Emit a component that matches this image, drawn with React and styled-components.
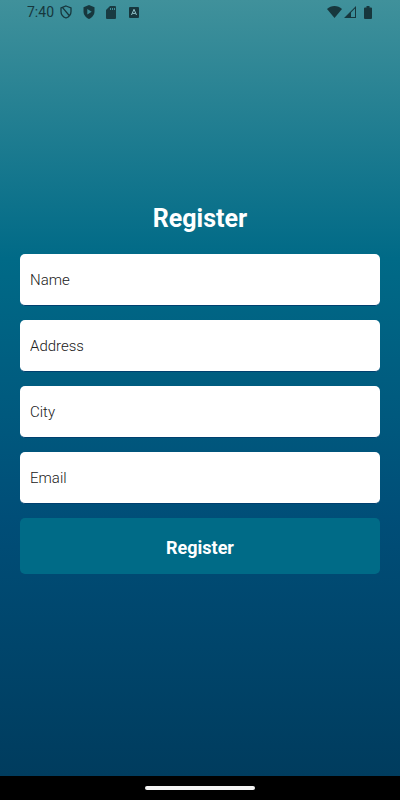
import React, { useState } from 'react';
import styled, { createGlobalStyle } from 'styled-components';

const GlobalStyle = createGlobalStyle`
  * {
    box-sizing: border-box;
  }

  body {
    margin: 0;
    background-color: #000000;
    font-family: Roboto, sans-serif;
  }
`;

const Screen = styled.div`
  display: flex;
  flex-direction: column;
  min-height: 100vh;
`;

const Background = styled.div`
  flex: 1;
  display: grid;
  grid-template-rows: 24px 1fr 24px;
  background-image: linear-gradient(#40919b, #006a87, #004e78, #003c5e);
`;

const StatusBar = styled.header`
  display: flex;
  align-items: center;
  justify-content: space-between;
  padding: 0 28px 0 27px;
  color: #17373d;
`;

const StatusGroup = styled.div`
  display: flex;
  align-items: center;
  gap: ${(props) => props.$gap}px;
`;

const Clock = styled.span`
  font-size: 14px;
  line-height: 24px;
`;

const Icon = styled.svg`
  display: block;
  fill: currentColor;
`;

const Form = styled.form`
  display: flex;
  flex-direction: column;
  justify-content: center;
  gap: 14px;
  padding: 0 20px;
`;

const Title = styled.h1`
  margin: 0 0 4px;
  color: #ffffff;
  font-size: 25px;
  font-weight: 700;
  line-height: 34px;
  text-align: center;
`;

const Input = styled.input`
  width: 100%;
  height: 52px;
  padding: 1px 10px 0;
  border: 1px solid #00406f;
  border-width: 0 0 1px;
  border-radius: 5px;
  background-color: #ffffff;
  color: #202020;
  font-family: inherit;
  font-size: 15px;
  font-weight: 300;

  &::placeholder {
    color: #202020;
    opacity: 1;
  }
`;

const Button = styled.button`
  height: 56px;
  padding: 2px 0 0;
  border: 0;
  border-radius: 5px;
  background-color: #006b87;
  color: #ffffff;
  font-family: inherit;
  font-size: 18px;
  font-weight: 700;
`;

const NavBar = styled.footer`
  display: flex;
  align-items: center;
  justify-content: center;
  height: 24px;
  background-color: #000000;
`;

const HomeHandle = styled.div`
  width: 110px;
  height: 4px;
  border-radius: 2px;
  background-color: #f4f4f4;
`;

const fields = [
  { name: 'name', label: 'Name', type: 'text' },
  { name: 'address', label: 'Address', type: 'text' },
  { name: 'city', label: 'City', type: 'text' },
  { name: 'email', label: 'Email', type: 'email' },
];

const ShieldOutlineIcon = () => (
  <Icon width="12" height="14" viewBox="0 0 12 14">
    <path
      d="M6 1 L11 3 V6.5 C11 9.8 8.8 12 6 13 C3.2 12 1 9.8 1 6.5 V3 Z M2.6 2.6 L9.6 11"
      fill="none"
      stroke="currentColor"
      strokeWidth="1.3"
    />
  </Icon>
);

const ShieldPlayIcon = () => (
  <Icon width="12" height="14" viewBox="0 0 12 14">
    <path
      fillRule="evenodd"
      d="M6 0 L11.5 2.2 V6.5 C11.5 10 9 12.8 6 14 C3 12.8 0.5 10 0.5 6.5 V2.2 Z M4.3 4 V9.6 L8.7 6.8 Z"
    />
  </Icon>
);

const SdCardIcon = () => (
  <Icon width="12" height="13" viewBox="0 0 12 13">
    <path
      fillRule="evenodd"
      d="M4 0 H9 Q10 0 10 1 V12 Q10 13 9 13 H1 Q0 13 0 12 V4 Z M4 2 V4 H5 V2 Z M6 2 V4 H7 V2 Z M8 2 V4 H9 V2 Z"
      fillOpacity="0.95"
    />
  </Icon>
);

const LetterBoxIcon = () => (
  <Icon width="10" height="11" viewBox="0 0 10 11">
    <rect width="10" height="11" rx="1" />
    <path d="M2.5 8 L5 2.3 L7.5 8 M3.4 6.4 H6.6" fill="none" stroke="#8fc0c6" />
  </Icon>
);

const WifiIcon = () => (
  <Icon width="15" height="12" viewBox="0 0 15 12">
    <path d="M0 3 C4 -1 11 -1 15 3 L7.5 12 Z" />
  </Icon>
);

const SignalIcon = () => (
  <Icon width="12" height="12" viewBox="0 0 12 12">
    <path fillRule="evenodd" d="M12 0 V12 H0 Z M11 2.5 L7 6.5 V11 H11 Z" />
  </Icon>
);

const BatteryIcon = () => (
  <Icon width="8" height="13" viewBox="0 0 8 13">
    <path d="M2.5 0 H5.5 V1.5 H7 Q8 1.5 8 2.5 V12 Q8 13 7 13 H1 Q0 13 0 12 V2.5 Q0 1.5 1 1.5 H2.5 Z" />
  </Icon>
);

const App = () => {
  const [values, setValues] = useState({ name: '', address: '', city: '', email: '' });

  const handleChange = (event) => {
    setValues({ ...values, [event.target.name]: event.target.value });
  };

  return (
    <Screen>
      <GlobalStyle />
      <Background>
        <StatusBar>
          <StatusGroup $gap={11}>
            <StatusGroup $gap={6}>
              <Clock>7:40</Clock>
              <ShieldOutlineIcon />
            </StatusGroup>
            <ShieldPlayIcon />
            <SdCardIcon />
            <LetterBoxIcon />
          </StatusGroup>
          <StatusGroup $gap={8}>
            <StatusGroup $gap={2}>
              <WifiIcon />
              <SignalIcon />
            </StatusGroup>
            <BatteryIcon />
          </StatusGroup>
        </StatusBar>
        <Form onSubmit={(event) => event.preventDefault()}>
          <Title>Register</Title>
          {fields.map(({ name, label, type }) => (
            <Input
              key={name}
              type={type}
              name={name}
              aria-label={label}
              placeholder={label}
              value={values[name]}
              onChange={handleChange}
            />
          ))}
          <Button type="submit">Register</Button>
        </Form>
      </Background>
      <NavBar>
        <HomeHandle />
      </NavBar>
    </Screen>
  );
};

export default App;
